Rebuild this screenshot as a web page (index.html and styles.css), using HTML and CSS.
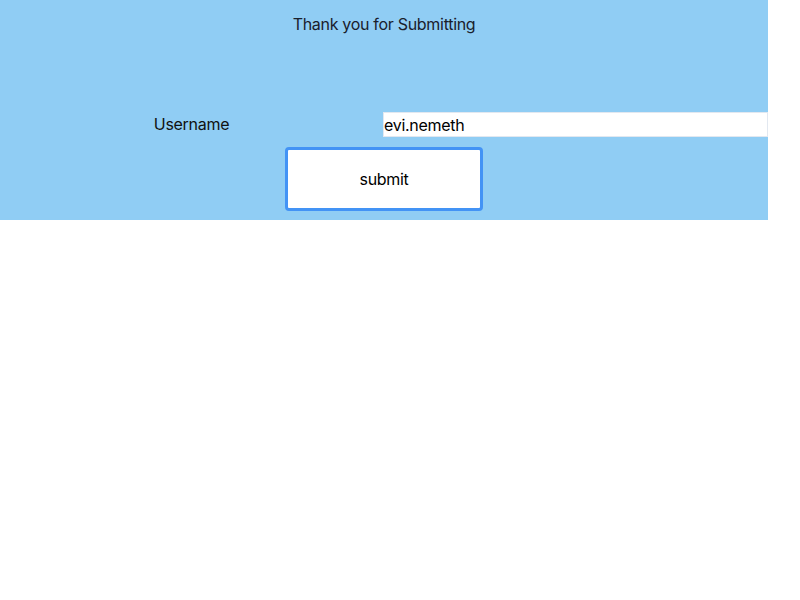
FILE: index.html
```html
<!DOCTYPE html>
<html>
<head>
<meta charset="utf-8">
<link rel="stylesheet" href="styles.css">
</head>
<body>
<div class="card">
  <div class="title">Thank you for Submitting</div>
  <form class="form">
    <div class="row">
      <label class="label" for="u">Username</label>
      <div class="field"><input id="u" class="input" type="text" value="evi.nemeth"></div>
    </div>
    <div class="actions">
      <button type="button" class="btn">submit</button>
    </div>
  </form>
</div>
</body>
</html>
```
FILE: styles.css
```css
html, body {
  margin: 0;
  padding: 0;
  background: #ffffff;
}
body {
  font-family: Inter, "Liberation Sans", sans-serif;
  font-size: 16px;
  letter-spacing: -0.3px;
}
.card {
  width: 768px;
  height: 220px;
  background: #90cdf4;
  box-sizing: border-box;
  padding-top: 12px;
}
.title {
  text-align: center;
  line-height: 24px;
  color: #1a202c;
}
.form {
  margin: 76px 0 0 0;
}
.row {
  display: grid;
  grid-template-columns: 383px 385px;
  align-items: center;
  height: 25px;
}
.label {
  text-align: center;
  color: #111;
  line-height: 24px;
  margin-top: -1px;
}
.field {
  display: flex;
}
.input {
  width: 100%;
  height: 25px;
  box-sizing: border-box;
  border: 1px solid #e2e8f0;
  padding: 0;
  margin: 0;
  font-family: inherit;
  font-size: 16px;
  letter-spacing: -0.3px;
  color: #000;
  background: #fff;
  outline: none;
}
.actions {
  display: flex;
  justify-content: center;
  margin-top: 10px;
}
.btn {
  width: 198px;
  height: 64px;
  box-sizing: border-box;
  border: 3px solid #4393f5;
  border-radius: 4px;
  background: #fff;
  font-family: inherit;
  font-size: 16px;
  letter-spacing: -0.3px;
  color: #000;
  padding: 0;
}
```
